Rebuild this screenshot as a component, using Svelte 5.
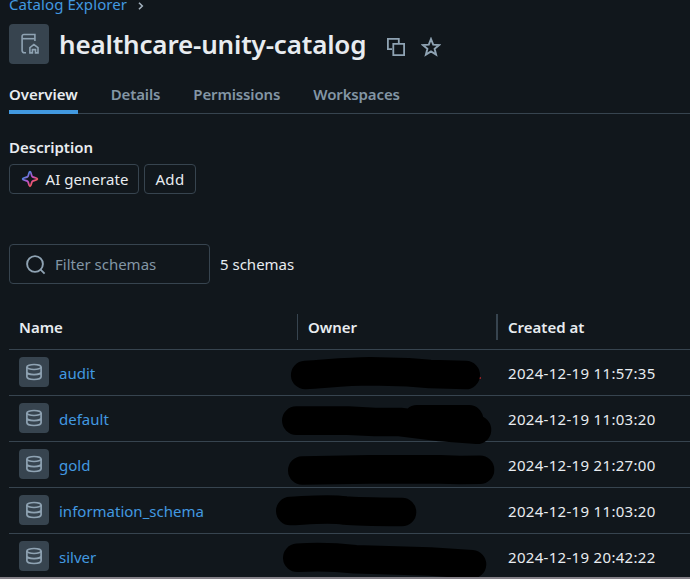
<script>
  const tabs = [
    { label: 'Overview', active: true },
    { label: 'Details' },
    { label: 'Permissions' },
    { label: 'Workspaces' }
  ];
  const schemas = [
    { name: 'audit', created: '2024-12-19 11:57:35' },
    { name: 'default', created: '2024-12-19 11:03:20' },
    { name: 'gold', created: '2024-12-19 21:27:00' },
    { name: 'information_schema', created: '2024-12-19 11:03:20' },
    { name: 'silver', created: '2024-12-19 20:42:22' }
  ];
</script>

<main>
  <nav class="crumbs">
    <a href="#catalog">Catalog Explorer</a>
    <svg width="6" height="8" viewBox="0 0 6 8"><path d="M1 .7 4.3 4 1 7.3" /></svg>
  </nav>

  <header>
    <span class="tile large">
      <svg width="20" height="22" viewBox="0 0 20 22" fill="none" stroke="#8fa3b3" stroke-width="1.6">
        <path d="M15.9 8V1.5H4.9A1.8 1.8 0 0 0 3.1 3.3V17.6A2.2 2.2 0 0 0 5.3 19.8H7" />
        <path d="M3.2 5.7H15.9" />
        <path d="M10.9 19.9V14.7L14.9 11.5 19 14.7V19.9H16.5V16.6H13.4V19.9Z" />
      </svg>
    </span>
    <h1>healthcare-unity-catalog</h1>
    <svg class="copy" width="18" height="18" viewBox="0 0 18 18"><path d="M5 11.2H.9V.9H11.8V5M6.3 5.9H17.1V17.1H6.3Z" /></svg>
    <svg class="star" width="20" height="20" viewBox="0 0 20 20"><path d="M10 2 12.2 7.6 18.1 8 13.6 11.8 15.1 17.6 10 14.4 4.9 17.6 6.4 11.8 1.9 8 7.8 7.6Z" /></svg>
  </header>

  <div class="tabs">
    {#each tabs as tab}
      <span class="tab" class:active={tab.active}>{tab.label}</span>
    {/each}
  </div>

  <h2>Description</h2>
  <div class="actions">
    <button class="ai">
      <svg width="18" height="18" viewBox="0 0 18 18">
        <defs>
          <linearGradient id="spark" x1="0" y1="0" x2="1" y2="1">
            <stop offset=".2" stop-color="#4a8be8" />
            <stop offset=".5" stop-color="#c04fc8" />
            <stop offset=".8" stop-color="#ff5a50" />
          </linearGradient>
        </defs>
        <path d="M9 1.6C10.3 1.6 10.2 5.6 11.3 6.7 12.4 7.8 16.4 7.7 16.4 9S12.4 10.2 11.3 11.3C10.2 12.4 10.3 16.4 9 16.4S7.8 12.4 6.7 11.3C5.6 10.2 1.6 10.3 1.6 9S5.6 7.8 6.7 6.7C7.8 5.6 7.7 1.6 9 1.6Z" fill="none" stroke="url(#spark)" stroke-width="1.8" />
      </svg>
      <span>AI generate</span>
    </button>
    <button class="add">Add</button>
  </div>

  <div class="filter">
    <div class="search">
      <svg width="20" height="20" viewBox="0 0 20 20"><circle cx="9" cy="9" r="7.9" /><path d="m14.6 14.6 4 4" /></svg>
      <span>Filter schemas</span>
    </div>
    <span class="count">5 schemas</span>
  </div>

  <section class="table">
    <div class="row head">
      <div class="name">Name</div>
      <div class="owner">Owner</div>
      <div class="created">Created at</div>
    </div>
    {#each schemas as schema}
      <div class="row">
        <div class="name">
          <span class="tile">
            <svg width="18" height="18" viewBox="0 0 18 18" fill="none" stroke="#8fa3b3" stroke-width="1.7">
              <ellipse cx="9" cy="4" rx="7.1" ry="2.5" />
              <path d="M1.9 4V13.8C1.9 15.3 5 16.5 9 16.5S16.1 15.3 16.1 13.8V4M1.9 8.9C1.9 10.4 5 11.6 9 11.6S16.1 10.4 16.1 8.9" />
            </svg>
          </span>
          <a href="#{schema.name}">{schema.name}</a>
        </div>
        <div class="owner"></div>
        <div class="created">{schema.created}</div>
      </div>
    {/each}
    <!-- hand-drawn marks covering the owner column -->
    <svg class="marks" width="230" height="230" viewBox="270 350 230 230">
      <path d="M479 378h2" stroke="#8e2024" stroke-width="2" />
      <g fill="none" stroke="#000" stroke-width="28.6" stroke-linecap="round" stroke-linejoin="round">
        <path d="M305.2 375C325 374 345 371.5 370 371.3L408 372.2 430 374 465.7 375" />
        <path d="M296.3 420.6H348L375 422H400L440 427 477 429.8M417 419.4H469" />
        <path d="M302.3 470.5 370 469.4H440L460 470 480 469.8" />
        <path d="M290.3 511C305 510.5 328 508 345 510.5 355 511.5 380 511.8 402 512" />
        <path d="M297.3 557.8C320 556.3 335 557 355 559.3L430 561.5 472 564.3" />
      </g>
    </svg>
  </section>
</main>

<style>
  :global(body) { margin: 0; background: #11171c; }
  main {
    width: 690px; height: 579px; box-sizing: border-box; padding-left: 9px;
    display: flex; flex-direction: column; overflow: hidden;
    background: #11171c; border-bottom: 2px solid #858188; color: #e8ecf0;
    font: 15px/20px "Noto Sans", "Open Sans", sans-serif;
  }
  main > * { flex: none; }
  a { color: #4299e0; text-decoration: none; }
  svg { flex: none; display: block; }
  .crumbs { display: flex; align-items: center; height: 15px; gap: 11px; letter-spacing: .08px; }
  .crumbs a { line-height: 15px; margin-top: -6px; }
  .crumbs svg { margin-top: -3px; fill: none; stroke: #a3b1bd; stroke-width: 1.6; }
  header { display: flex; align-items: center; height: 40px; margin-top: 9px; }
  .tile { width: 30px; height: 30px; flex: none; border-radius: 4px; background: #37444f; display: flex; align-items: center; justify-content: center; }
  .large { width: 40px; height: 40px; }
  h1 { margin: 0 0 0 10px; width: 307px; font-size: 26px; line-height: 36px; font-weight: 600; letter-spacing: -.17px; white-space: nowrap; }
  .copy { margin: 6px 0 0 21px; fill: none; stroke: #8fa3b3; stroke-width: 1.8; }
  .star { margin: 5px 0 0 16px; fill: none; stroke: #8fa3b3; stroke-width: 1.9; }
  .tabs { display: flex; gap: 33px; height: 50px; box-sizing: border-box; border-bottom: 1px solid #37444f; color: #8396a5; font-weight: 600; letter-spacing: -.13px; }
  .tab { height: 50px; box-sizing: border-box; padding-top: 20px; white-space: nowrap; }
  .tab.active { color: #e8ecf0; border-bottom: 4px solid #4299e0; letter-spacing: 0; }
  h2 { margin: 23px 0 0; font-size: 15px; line-height: 20px; font-weight: 600; }
  .actions { display: flex; gap: 5px; margin-top: 7px; }
  button { height: 30px; box-sizing: border-box; border: 1px solid #37444f; border-radius: 4px; background: transparent; color: #e8ecf0; font: inherit; padding: 0; display: flex; align-items: center; justify-content: center; white-space: nowrap; }
  .ai { width: 130px; gap: 6px; letter-spacing: .08px; padding-left: 2px; }
  .add { width: 52px; letter-spacing: .4px; }
  .filter { display: flex; align-items: center; gap: 10px; margin-top: 50px; height: 40px; }
  .search { width: 201px; height: 40px; box-sizing: border-box; border: 1px solid #37444f; border-radius: 4px; display: flex; align-items: center; gap: 9px; padding-left: 16px; color: #8396a5; }
  .search svg { margin-top: 1px; fill: none; stroke: #8fa3b3; stroke-width: 1.9; }
  .table { position: relative; margin-top: 20px; }
  .row { display: flex; align-items: center; height: 46px; box-sizing: border-box; border-bottom: 1px solid #37444f; }
  .row:nth-last-child(2) { border-bottom-color: transparent; }
  .name { width: 288px; padding-left: 10px; box-sizing: border-box; display: flex; align-items: center; gap: 10px; }
  .owner { width: 199px; box-sizing: border-box; }
  .created { padding-left: 12px; white-space: nowrap; letter-spacing: .31px; }
  .row .tile { margin-top: -1px; }
  .head { font-weight: 600; }
  .head .owner { border-left: 1px solid #37444f; padding-left: 10px; line-height: 26px; }
  .head .created { border-left: 2px solid #37444f; padding-left: 10px; line-height: 26px; letter-spacing: 0; }
  .marks { position: absolute; left: 261px; top: 46px; }
</style>
